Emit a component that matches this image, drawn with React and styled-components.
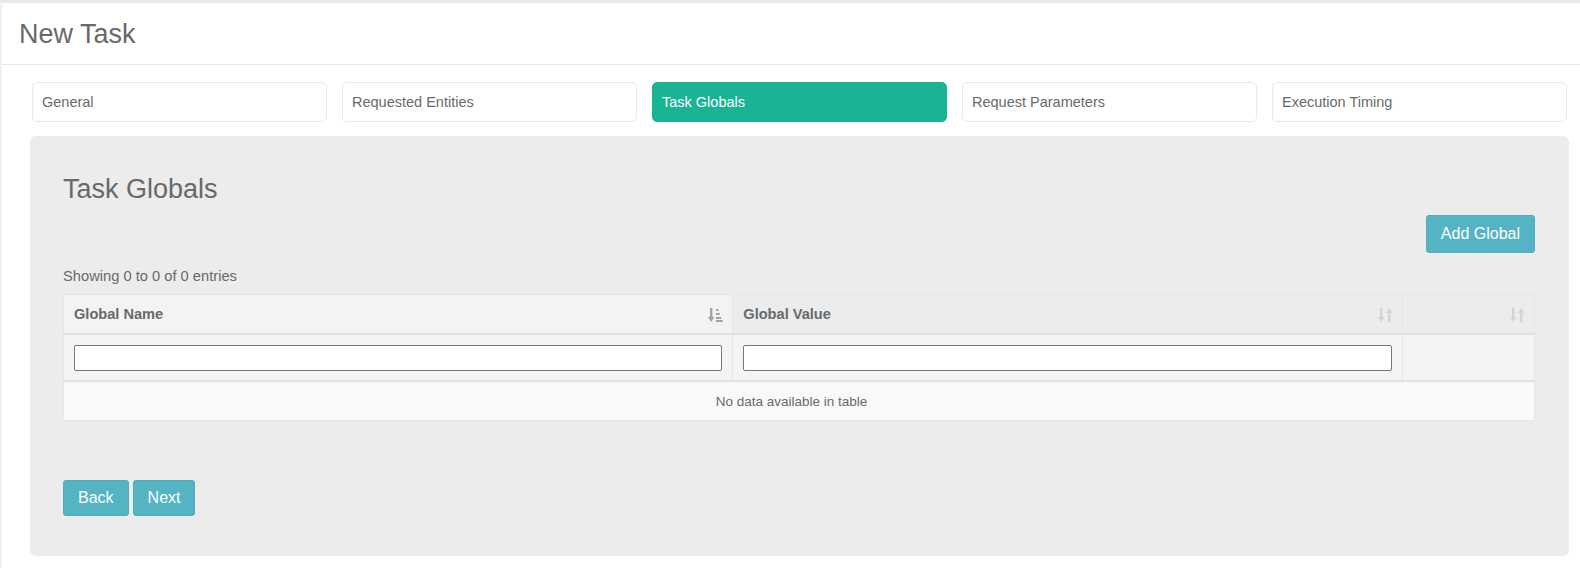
import styled, { createGlobalStyle } from "styled-components";

const GlobalStyle = createGlobalStyle`
  body {
    margin: 0;
    background: #fff;
    font-family: "Liberation Sans", Arial, sans-serif;
    color: #676a6c;
  }
`;

const tabs = [
  "General",
  "Requested Entities",
  "Task Globals",
  "Request Parameters",
  "Execution Timing",
];

const SortIcon = ({ active }) => (
  <svg width="15" height="16" viewBox="0 0 15 16">
    {active ? (
      <g fill="#a3a3a3">
        <rect x="2" y="1" width="2.4" height="10" />
        <polygon points="0,10 6.4,10 3.2,15" />
        <rect x="8" y="2" width="2.4" height="2" />
        <rect x="8" y="6" width="3.8" height="2" />
        <rect x="8" y="10" width="5.2" height="2" />
        <rect x="8" y="13" width="6.6" height="2" />
      </g>
    ) : (
      <g fill="#d4d4d4">
        <rect x="2" y="1" width="2.4" height="10" />
        <polygon points="0,10 6.4,10 3.2,15" />
        <rect x="10" y="5" width="2.4" height="10" />
        <polygon points="8,6 14.4,6 11.2,1" />
      </g>
    )}
  </svg>
);

const App = () => {
  return (
    <Page>
      <GlobalStyle />
      <Header>
        <h2>New Task</h2>
      </Header>
      <Content>
        <TabRow>
          {tabs.map((t) => (
            <Tab key={t} $active={t === "Task Globals"}>
              {t}
            </Tab>
          ))}
        </TabRow>
        <Card>
          <Heading>Task Globals</Heading>
          <Toolbar>
            <Button>Add Global</Button>
          </Toolbar>
          <Info>Showing 0 to 0 of 0 entries</Info>
          <Table>
            <thead>
              <tr>
                <Th $sorted style={{ width: "45.5%" }}>
                  <span>Global Name</span>
                  <SortIcon active />
                </Th>
                <Th style={{ width: "45.5%" }}>
                  <span>Global Value</span>
                  <SortIcon />
                </Th>
                <Th>
                  <span />
                  <SortIcon />
                </Th>
              </tr>
            </thead>
            <tbody>
              <FilterRow>
                <td>
                  <input type="text" />
                </td>
                <td>
                  <input type="text" />
                </td>
                <td />
              </FilterRow>
              <EmptyRow>
                <td colSpan={3}>No data available in table</td>
              </EmptyRow>
            </tbody>
          </Table>
          <Actions>
            <Button $small>Back</Button>
            <Button $small>Next</Button>
          </Actions>
        </Card>
      </Content>
    </Page>
  );
};

export default App;

const Page = styled.div`
  border-top: 3px solid #e7e9eb;
  border-left: 2px solid #f1f1f1;
  min-height: 565px;
  box-sizing: border-box;
`;

const Header = styled.div`
  height: 61px;
  border-bottom: 1px solid #e4e7ea;
  display: flex;
  align-items: center;
  padding-left: 17px;

  h2 {
    margin: 0;
    font-size: 27px;
    font-weight: 400;
    color: #676a6c;
    padding-top: 1px;
  }
`;

const Content = styled.div`
  padding: 17px 11px 12px 28px;
`;

const TabRow = styled.div`
  display: grid;
  grid-template-columns: repeat(5, 1fr);
  gap: 15px;
  margin: 0 2px;
`;

const Tab = styled.div`
  height: 40px;
  box-sizing: border-box;
  display: flex;
  align-items: center;
  padding-left: 9px;
  font-size: 14.5px;
  border-radius: 5px;
  border: 1px solid ${(p) => (p.$active ? "#1ab394" : "#e7eaec")};
  background: ${(p) => (p.$active ? "#1ab394" : "#fff")};
  color: ${(p) => (p.$active ? "#fff" : "#676a6c")};
`;

const Card = styled.div`
  margin-top: 14px;
  background: #ececec;
  border-radius: 6px;
  padding: 38px 34px 40px 33px;
`;

const Heading = styled.h3`
  margin: 0;
  font-size: 27px;
  line-height: 28px;
  font-weight: 400;
  color: #676a6c;
  padding-top: 1px;
`;

const Toolbar = styled.div`
  display: flex;
  justify-content: flex-end;
  margin-top: 12px;
`;

const Button = styled.button`
  height: ${(p) => (p.$small ? "36px" : "38px")};
  padding: 0 14px;
  background: #54b4c4;
  border: 1px solid #4fadbd;
  border-radius: 3px;
  color: #fff;
  font-family: "Liberation Sans", Arial, sans-serif;
  font-size: 16px;
  cursor: pointer;
`;

const Info = styled.div`
  margin-top: 13px;
  font-size: 14.7px;
  line-height: 20px;
`;

const Table = styled.table`
  margin-top: 8px;
  width: 100%;
  border-collapse: collapse;
  font-size: 14.6px;
  border: 1px solid #e5e5e5;
`;

const Th = styled.th`
  height: 38px;
  padding: 0 9px 0 10px;
  text-align: left;
  font-weight: 700;
  color: #676a6c;
  background: ${(p) => (p.$sorted ? "#f3f3f3" : "#ececec")};
  border: 1px solid #e6e6e6;
  border-bottom: 2px solid #e1e1e1;

  span {
    display: inline-block;
  }

  svg {
    float: right;
    margin-top: 1px;
  }
`;

const FilterRow = styled.tr`
  background: #f4f4f4;

  td {
    height: 45px;
    padding: 0 10px;
    border: 1px solid #e6e6e6;
    border-bottom: 2px solid #e1e1e1;
  }

  input {
    display: block;
    width: 100%;
    height: 26px;
    box-sizing: border-box;
    border: 1px solid #767676;
    border-radius: 2px;
    background: #fff;
  }
`;

const EmptyRow = styled.tr`
  background: #f9f9f9;

  td {
    height: 38px;
    padding: 0 15px 0 0;
    font-size: 13.5px;
    text-align: center;
    border: 1px solid #e6e6e6;
  }
`;

const Actions = styled.div`
  display: flex;
  gap: 4px;
  margin-top: 59px;
`;
